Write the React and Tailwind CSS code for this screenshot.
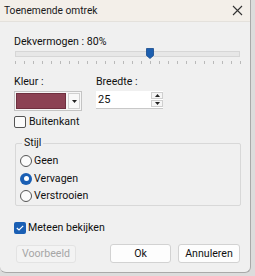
import React from "react";

export default function App() {
  const ticks = Array.from({ length: 26 }, (_, i) => i);
  return (
    <div className="w-[255px] h-[276px] bg-[#dcdcdc] overflow-hidden" style={{ fontFamily: 'Roboto, "Noto Sans", sans-serif' }}>
      <div className="w-[251px] h-[273px] bg-[#f0f0f0] border-r border-b border-[#a9a9a9] rounded-br-[6px] rounded-bl-[6px] flex flex-col text-[10.6px] text-[#111] leading-[16px]">
        {/* Title bar */}
        <div className="h-[22px] shrink-0 bg-[#f3efe9] flex items-center justify-between pl-[4px] pr-[7px] border-b border-[#e4e1dc]">
          <span className="text-[#1a1a1a] text-[10.2px]">Toenemende omtrek</span>
          <svg width="11" height="11" viewBox="0 0 11 11" className="text-[#333]">
            <path d="M1 1 L10 10 M10 1 L1 10" stroke="currentColor" strokeWidth="1.1" />
          </svg>
        </div>

        <div className="flex flex-col pl-[14px] pr-[10px]">
          <div className="mt-[12px] h-[16px]">Dekvermogen : 80%</div>

          {/* Slider */}
          <div className="relative ml-[1px] w-[225px] h-[14px] mt-[1px]">
            <div className="absolute left-0 right-0 top-0 h-[6px] bg-[#e7e7e7] border border-[#d6d6d6]" />
            <svg className="absolute left-[131px] top-[-3px]" width="8" height="11" viewBox="0 0 8 11">
              <path d="M0.5 0.5 H7.5 V7.5 L4 10.5 L0.5 7.5 Z" fill="#1d5fb0" stroke="#164a8c" strokeWidth="0.8" />
            </svg>
            <div className="absolute left-0 right-0 top-[10px] h-[3px]">
              {ticks.map((i) => (
                <div key={i} className="absolute top-0 w-px h-[3px] bg-[#b9b9b9]" style={{ left: i * 9 }} />
              ))}
            </div>
          </div>

          {/* Kleur / Breedte */}
          <div className="flex mt-[9px]">
            <div className="flex flex-col w-[82px]">
              <div className="h-[16px]">Kleur :</div>
              <div className="mt-[1px] w-[68px] h-[20px] border border-[#c4c4c4] bg-[#f7f7f7] flex items-center pl-[1px] pr-[1px] gap-[2px]">
                <div className="w-[51px] h-[16px] bg-[#8c4254] border border-[#6f3040]" />
                <div className="w-[12px] h-[16px] bg-[#f9f9f9] border border-[#d0d0d0] flex items-center justify-center">
                  <svg width="5" height="3" viewBox="0 0 5 3"><path d="M0 0 H5 L2.5 3 Z" fill="#222" /></svg>
                </div>
              </div>
            </div>
            <div className="flex flex-col">
              <div className="h-[16px]">Breedte :</div>
              <div className="mt-[1px] w-[67px] h-[18px] flex bg-white border-b border-[#c8c8c8]">
                <div className="flex-1 pl-[2px] flex items-center text-[11px]">25</div>
                <div className="w-[12px] flex flex-col gap-[1px] py-[1px]">
                  <div className="flex-1 bg-[#f6f6f6] border border-[#cfcfcf] flex items-center justify-center">
                    <svg width="5" height="3" viewBox="0 0 5 3"><path d="M0 3 H5 L2.5 0 Z" fill="#222" /></svg>
                  </div>
                  <div className="flex-1 bg-[#f6f6f6] border border-[#cfcfcf] flex items-center justify-center">
                    <svg width="5" height="3" viewBox="0 0 5 3"><path d="M0 0 H5 L2.5 3 Z" fill="#222" /></svg>
                  </div>
                </div>
              </div>
            </div>
          </div>

          {/* Buitenkant */}
          <div className="flex items-center mt-[3px] gap-[3px] h-[16px]">
            <div className="w-[12px] h-[12px] border border-[#555] rounded-[2px] bg-[#fbfbfb]" />
            <span>Buitenkant</span>
          </div>

          {/* Stijl group */}
          <div className="relative mt-[13px] ml-[1px] w-[226px] h-[63px] border border-[#d8d8d8] rounded-[2px]">
            <span className="absolute left-[6px] top-[-9px] bg-[#f0f0f0] px-[2px]">Stijl</span>
            <div className="flex flex-col pl-[4px] pt-[9px] gap-[1.5px]">
              <div className="flex items-center gap-[2px] h-[16px]">
                <div className="w-[12px] h-[12px] rounded-full border border-[#555] bg-[#fbfbfb]" />
                <span>Geen</span>
              </div>
              <div className="flex items-center gap-[2px] h-[16px]">
                <div className="w-[12px] h-[12px] rounded-full bg-[#1a5fb4] flex items-center justify-center">
                  <div className="w-[5px] h-[5px] rounded-full bg-white" />
                </div>
                <span>Vervagen</span>
              </div>
              <div className="flex items-center gap-[2px] h-[16px]">
                <div className="w-[12px] h-[12px] rounded-full border border-[#555] bg-[#fbfbfb]" />
                <span>Verstrooien</span>
              </div>
            </div>
          </div>

          {/* Meteen bekijken */}
          <div className="flex items-center mt-[14px] gap-[2px] h-[16px]">
            <div className="w-[12px] h-[12px] rounded-[2px] bg-[#1a5fb4] flex items-center justify-center">
              <svg width="8" height="6" viewBox="0 0 8 6"><path d="M0.8 3 L3 5 L7.2 0.8" stroke="white" strokeWidth="1.2" fill="none" /></svg>
            </div>
            <span>Meteen bekijken</span>
          </div>

          {/* Buttons */}
          <div className="flex items-center mt-[8px] pl-[2px]">
            <div className="w-[60px] h-[18px] bg-[#f3f3f3] border border-[#e3e3e3] rounded-[3px] flex items-center justify-center text-[#a6a6a6]">Voorbeeld</div>
            <div className="ml-[34px] w-[61px] h-[19px] bg-[#fdfdfd] border border-[#d2d2d2] rounded-[3px] flex items-center justify-center">Ok</div>
            <div className="ml-[7px] w-[62px] h-[19px] bg-[#fdfdfd] border border-[#d2d2d2] rounded-[3px] flex items-center justify-center">Annuleren</div>
          </div>
        </div>
      </div>
    </div>
  );
}
